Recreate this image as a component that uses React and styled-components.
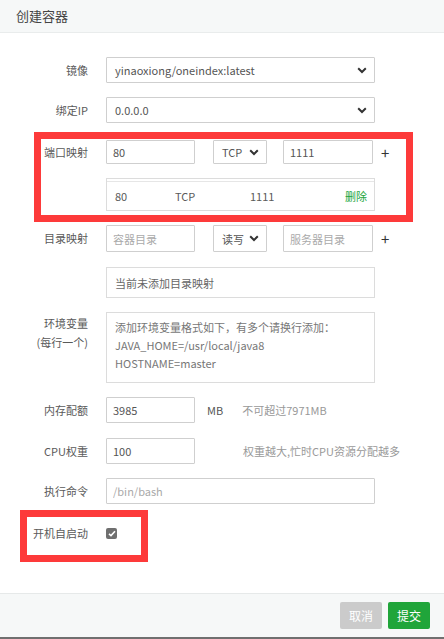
import React from 'react'
import styled, { createGlobalStyle } from 'styled-components'

const GlobalStyle = createGlobalStyle`
  html, body {
    margin: 0;
    padding: 0;
    background: #fff;
  }
  * {
    box-sizing: border-box;
  }
`

const Page = styled.div`
  width: 444px;
  height: 639px;
  display: flex;
  flex-direction: column;
  font-family: "Noto Sans CJK SC", "Noto Sans", sans-serif;
  font-size: 11px;
  color: #555;
  border-bottom: 2px solid #707070;
`

const Header = styled.div`
  height: 33px;
  flex: 0 0 33px;
  line-height: 32px;
  padding-left: 16px;
  font-size: 13px;
  color: #444;
  background-color: #f6f8f8;
  background-image: radial-gradient(#e6eaea 0.6px, transparent 0.6px);
  background-size: 6px 6px;
  border-bottom: 1px solid #e9ecec;
`

const Body = styled.div`
  flex: 1;
  padding-top: 24px;
`

const Row = styled.div`
  position: relative;
  display: flex;
  align-items: ${(p) => (p.$top ? 'flex-start' : 'center')};
  margin-bottom: ${(p) => p.$mb ?? 14}px;
  margin-top: ${(p) => p.$mt ?? 0}px;
`

const Label = styled.div`
  flex: 0 0 106px;
  padding-right: 18px;
  text-align: right;
  line-height: 19px;
  color: #5a5a5a;
  padding-top: ${(p) => (p.$top ? 2 : 0)}px;
`

const Indent = styled.div`
  margin-left: 106px;
`

const Input = styled.input`
  width: ${(p) => p.$w}px;
  height: ${(p) => p.$h ?? 26}px;
  border: 1px solid #cfcfcf;
  border-radius: 1px;
  padding: 0 6px;
  font-family: inherit;
  font-size: 11px;
  color: #555;
  outline: none;
  &::placeholder {
    color: #aaa;
  }
`

const Select = styled.div`
  width: ${(p) => p.$w}px;
  height: ${(p) => p.$h ?? 26}px;
  border: 1px solid #cfcfcf;
  border-radius: 1px;
  padding: 0 7px 0 8px;
  display: flex;
  align-items: center;
  justify-content: space-between;
  color: #555;
  background: #fff;
`

const Gap = styled.div`
  width: ${(p) => p.$w}px;
  flex: 0 0 auto;
`

const Plus = styled.span`
  margin-left: 8px;
  font-size: 15px;
  color: #333;
  line-height: 1;
`

const ListBox = styled.div`
  width: 269px;
  height: 33px;
  border: 1px solid #dcdcdc;
  box-shadow: inset 0 2px 0 #fff, inset 0 3px 0 #e6e6e6;
  display: flex;
  align-items: center;
  padding: 2px 7px 0 8px;
  color: #5a5a5a;
`

const Cell = styled.span`
  width: ${(p) => p.$w}px;
`

const Delete = styled.span`
  margin-left: auto;
  color: #20a53a;
`

const EmptyBox = styled.div`
  width: 269px;
  height: 31px;
  border: 1px solid #dcdcdc;
  display: flex;
  align-items: center;
  padding-left: 8px;
  color: #666;
`

const TextArea = styled.textarea`
  width: 269px;
  height: 71px;
  border: 1px solid #dcdcdc;
  padding: 5px 8px;
  font-family: inherit;
  font-size: 11px;
  line-height: 18px;
  resize: none;
  outline: none;
  &::placeholder {
    color: #777;
  }
`

const Unit = styled.span`
  margin-left: 12px;
  color: #555;
`

const Hint = styled.span`
  margin-left: ${(p) => p.$ml}px;
  color: #999;
`

const Check = styled.span`
  width: 11px;
  height: 11px;
  border-radius: 2px;
  background: #6f6f6f;
  display: inline-flex;
  align-items: center;
  justify-content: center;
`

const Highlight = styled.div`
  position: absolute;
  top: ${(p) => p.$t}px;
  left: ${(p) => p.$l}px;
  width: ${(p) => p.$w}px;
  height: ${(p) => p.$h}px;
  border: 7px solid #fd3a3a;
  pointer-events: none;
`

const PortGroup = styled.div`
  position: relative;
  margin-bottom: 14px;
`

const Footer = styled.div`
  flex: 0 0 44px;
  height: 44px;
  border-top: 1px solid #e6e9e9;
  background-color: #f6f8f8;
  background-image: radial-gradient(#e6eaea 0.6px, transparent 0.6px);
  background-size: 6px 6px;
  display: flex;
  justify-content: flex-end;
  align-items: flex-start;
  padding: 8px 14px 0 0;
  gap: 6px;
`

const Button = styled.button`
  width: 42px;
  height: 27px;
  border: none;
  border-radius: 2px;
  font-family: inherit;
  font-size: 12px;
  color: #fff;
  background: ${(p) => (p.$primary ? '#20a53a' : '#cbcbcb')};
  padding: 0;
`

const Chevron = () => (
  <svg width='10' height='7' viewBox='0 0 10 7'>
    <path d='M1.2 1.3 L5 5 L8.8 1.3' fill='none' stroke='#333' strokeWidth='2' />
  </svg>
)

const App = () => {
  return (
    <>
      <GlobalStyle />
      <Page>
        <Header>创建容器</Header>
        <Body>
          <Row>
            <Label>镜像</Label>
            <Select $w={269}>
              <span>yinaoxiong/oneindex:latest</span>
              <Chevron />
            </Select>
          </Row>
          <Row $mb={17}>
            <Label>绑定IP</Label>
            <Select $w={269}>
              <span>0.0.0.0</span>
              <Chevron />
            </Select>
          </Row>

          {/* ===port mapping */}
          <PortGroup>
            <Row>
              <Label>端口映射</Label>
              <Input $w={89} $h={24} defaultValue='80' />
              <Gap $w={18} />
              <Select $w={54} $h={24}>
                <span>TCP</span>
                <Chevron />
              </Select>
              <Gap $w={16} />
              <Input $w={90} $h={24} defaultValue='1111' />
              <Plus>+</Plus>
            </Row>
            <Indent>
              <ListBox>
                <Cell $w={60}>80</Cell>
                <Cell $w={75}>TCP</Cell>
                <Cell $w={60}>1111</Cell>
                <Delete>删除</Delete>
              </ListBox>
            </Indent>
            <Highlight $t={-8} $l={34} $w={379} $h={90} />
          </PortGroup>

          <Row $mb={15}>
            <Label>目录映射</Label>
            <Input $w={89} $h={27} placeholder='容器目录' />
            <Gap $w={18} />
            <Select $w={54} $h={27}>
              <span>读写</span>
              <Chevron />
            </Select>
            <Gap $w={16} />
            <Input $w={90} $h={27} placeholder='服务器目录' />
            <Plus>+</Plus>
          </Row>
          <Row>
            <Indent>
              <EmptyBox>当前未添加目录映射</EmptyBox>
            </Indent>
          </Row>
          <Row $top>
            <Label $top>
              环境变量
              <br />
              (每行一个)
            </Label>
            <TextArea
              placeholder={'添加环境变量格式如下，有多个请换行添加：\nJAVA_HOME=/usr/local/java8\nHOSTNAME=master'}
            />
          </Row>
          <Row $mb={15}>
            <Label>内存配额</Label>
            <Input $w={89} defaultValue='3985' />
            <Unit>MB</Unit>
            <Hint $ml={19}>不可超过7971MB</Hint>
          </Row>
          <Row>
            <Label>CPU权重</Label>
            <Input $w={89} defaultValue='100' />
            <Hint $ml={48}>权重越大,忙时CPU资源分配越多</Hint>
          </Row>
          <Row>
            <Label>执行命令</Label>
            <Input $w={269} placeholder='/bin/bash' />
          </Row>
          <Row $mt={20}>
            <Label>开机自启动</Label>
            <Check>
              <svg width='8' height='7' viewBox='0 0 8 7'>
                <path d='M1 3.8 L3 5.6 L7 1.2' fill='none' stroke='#fff' strokeWidth='1.6' />
              </svg>
            </Check>
            <Highlight $t={-14} $l={20} $w={128} $h={52} />
          </Row>
        </Body>
        <Footer>
          <Button>取消</Button>
          <Button $primary>提交</Button>
        </Footer>
      </Page>
    </>
  )
}

export default App
